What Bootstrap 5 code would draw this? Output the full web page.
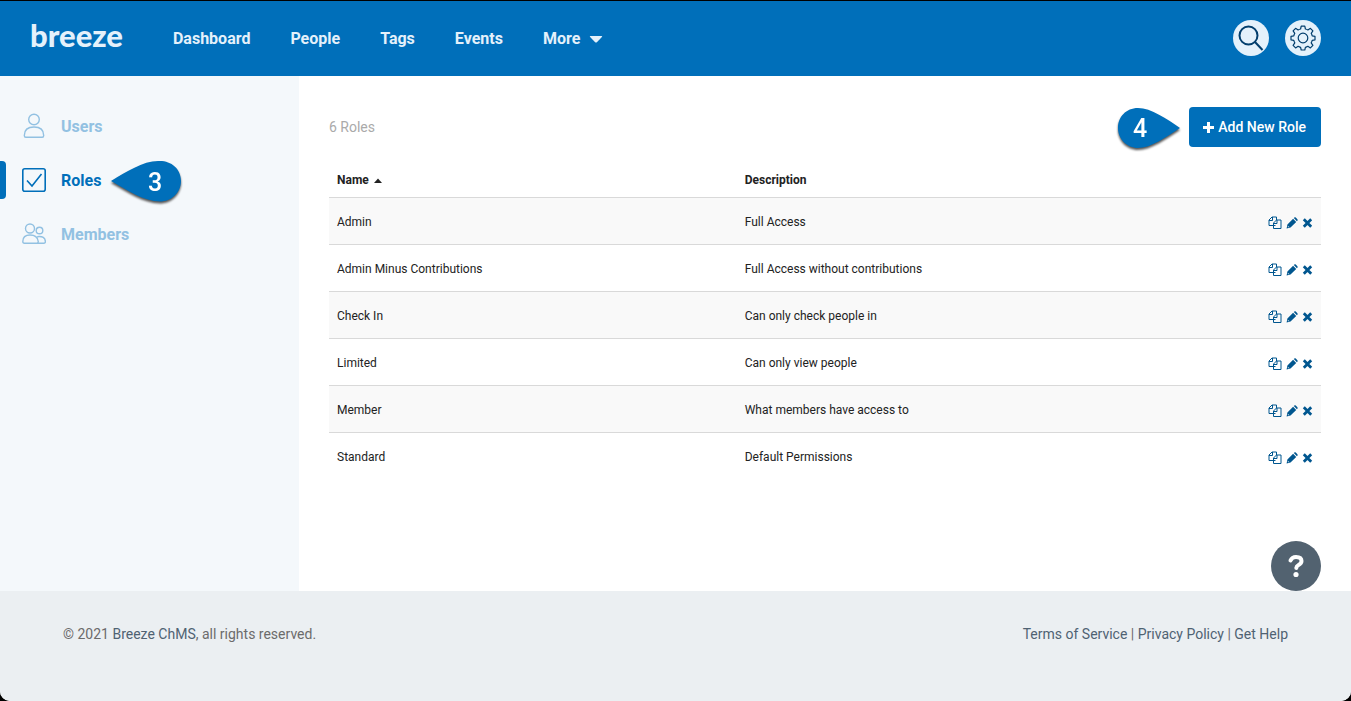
<!DOCTYPE html>
<html lang="en">
<head>
<meta charset="utf-8">
<meta name="viewport" content="width=device-width, initial-scale=1">
<title>Roles | Breeze</title>
<link href="https://cdn.jsdelivr.net/npm/bootstrap@5.3.0/dist/css/bootstrap.min.css" rel="stylesheet">
<style>
  :root { --brand: #006fba; --pale: #e4f1fb; --slate: #4f6272; }
  body { font-family: Roboto, "Liberation Sans", sans-serif; font-size: 14px; line-height: 20px; background: #000; color: #333; }
  a { text-decoration: none; }
  .frame { border-top: 1px solid #000; border-radius: 0 0 10px 10px; overflow: hidden; background: #fff; }
  .topbar { background: var(--brand); padding: 0 30px; min-height: 75px; }
  .logo { font-family: Lato, sans-serif; font-weight: 900; font-size: 31px; line-height: 40px; color: var(--pale); padding-bottom: 8px; margin-right: 50px; }
  .topbar .nav { gap: 40px; }
  .topbar .nav-link { padding: 0; font-size: 16px; font-weight: 700; line-height: 24px; color: var(--pale); }
  .round-tools { padding-bottom: 2px; }
  .round-btn { width: 36px; height: 36px; padding: 0; border: 0; border-radius: 50%; background: var(--pale); color: #023e6d; }
  .sidebar { flex: 0 0 299px; background: #f4f8fb; padding-top: 31px; gap: 16px; }
  .side-row { height: 38px; padding-left: 22px; }
  .side-row a { gap: 15px; font-size: 16px; font-weight: 700; line-height: 24px; color: #92c1e2; }
  .side-row span { padding-top: 2px; }
  .side-row.current { position: relative; }
  .side-row.current::before { content: ""; position: absolute; left: 0; top: 0; bottom: 0; width: 6px; background: var(--brand); border-radius: 0 4px 4px 0; }
  .side-row.current a { color: var(--brand); }
  .side-row .marker { margin-left: 9px; }
  .marker { filter: drop-shadow(0 2px 1px #555); }
  .marker text { font: 500 25px Roboto, sans-serif; fill: #fff; text-anchor: middle; }
  .content { padding: 30px; }
  .content-head { margin-bottom: 15px; }
  .role-count { color: #aaa; }
  .btn-add { --bs-btn-color: #fff; --bs-btn-bg: var(--brand); --bs-btn-hover-color: #fff; --bs-btn-hover-bg: #005c9b; height: 40px; padding: 0 15px 0 14px; border: 0; border-radius: 4px; font-size: 14px; font-weight: 500; line-height: 20px; }
  .roles { font-size: 12px; line-height: 18px; --bs-table-striped-bg: #f9f9f9; --bs-table-color: #222; --bs-table-striped-color: #222; }
  .roles th { padding: 8px; border-color: #d9d9d9; }
  .roles td { padding: 15px 8px 13px; border-color: #d9d9d9; }
  .roles tbody tr:last-child td { border-bottom: 0; }
  .roles .col-name { width: 41.1%; }
  .roles a { color: #00568f; }
  .actions { gap: 4px; height: 18px; padding-top: 2px; }
  .help { width: 50px; height: 50px; padding: 0; border: 0; border-radius: 50%; background: #526270; right: 30px; bottom: 0; }
  .foot { background: #ebeff2; color: #6b6b6b; padding: 33px 63px 57px; }
  .foot a { color: var(--slate); }
</style>
</head>
<body>
<svg class="d-none">
  <symbol id="copy" viewBox="0 0 14 14"><g fill="none" stroke="currentColor"><path d="M7.500 9.500h-6.500v-5.500l3-3h4.500v3M4.500 1v3.500h-3.500M5.500 12.500v-5.500l3-3h4.500v8.500zM9 4v3.500h-3.500"/></g></symbol>
  <symbol id="edit" viewBox="0 0 12 12"><path fill="currentColor" d="M.6 11.400l.8-3.900 5.700-5.700 3.100 3.100-5.700 5.700zM7.800 1.100l.5-.5q.8-.6 1.500 0l1.600 1.600q.6.800 0 1.500l-.5.500z"/><path d="M2.200 9v.9h.9" stroke="#fff" stroke-width=".6" fill="none"/></symbol>
  <symbol id="remove" viewBox="0 0 10 10"><path stroke="currentColor" stroke-width="2.800" d="M1.300 1.300l7.400 7.400M8.700 1.300l-7.400 7.400"/></symbol>
</svg>
<div class="frame d-flex flex-column min-vh-100">
  <header class="topbar d-flex align-items-center">
    <a class="logo" href="#">breeze</a>
    <nav class="nav" aria-label="Main">
      <a class="nav-link" href="#">Dashboard</a>
      <a class="nav-link" href="#">People</a>
      <a class="nav-link" href="#">Tags</a>
      <a class="nav-link" href="#">Events</a>
      <a class="nav-link d-flex align-items-center gap-2" href="#">More <svg width="16" height="8" aria-hidden="true"><path fill="currentColor" d="M2.500 1h11q1.300 0 .4 1l-5 5.200q-.9.800-1.800 0l-5-5.200q-.9-1 .4-1z"/></svg></a>
    </nav>
    <div class="round-tools d-flex gap-3 ms-auto">
      <button class="round-btn d-grid justify-content-center align-content-center" type="button" aria-label="Search"><svg width="26" height="26" fill="none" stroke="currentColor" stroke-width="2"><circle cx="10.500" cy="10.500" r="9"/><path d="M17 17l7.500 8"/></svg></button>
      <button class="round-btn d-grid justify-content-center align-content-center" type="button" aria-label="Settings"><svg width="26" height="26" viewBox="0 0 26 26" fill="none" stroke="currentColor" stroke-width="1.200" stroke-linejoin="round"><circle cx="13" cy="13" r="4.800"/><path d="M11.200 1.200h3.600l.6 2.800q1.300.3 2.500 1l2.500-1.700 2.500 2.500-1.700 2.500q.7 1.200 1 2.500l2.800.5v3.500l-2.800.6q-.3 1.300-1 2.500l1.700 2.500-2.500 2.500-2.500-1.600q-1.200.7-2.500 1l-.6 2.700h-3.600l-.6-2.700q-1.300-.3-2.500-1l-2.500 1.600-2.500-2.500 1.700-2.500q-.7-1.200-1-2.500l-2.800-.6v-3.500l2.800-.5q.3-1.300 1-2.500l-1.700-2.500 2.500-2.500 2.500 1.700q1.200-.7 2.500-1z"/></svg></button>
    </div>
  </header>

  <main class="d-flex flex-grow-1 position-relative">
    <nav class="sidebar d-flex flex-column" aria-label="Settings sections">
      <div class="side-row d-flex align-items-center">
        <a class="d-flex align-items-center" href="#"><svg width="24" height="26" fill="none" stroke="currentColor" stroke-width="1.400"><circle cx="12" cy="6.500" r="5.300"/><path d="M2.300 22.500q0-8.500 9.700-8.500t9.700 8.500q0 1.800-1.500 1.800h-16.400q-1.500 0-1.500-1.800z"/></svg><span>Users</span></a>
      </div>
      <div class="side-row current d-flex align-items-center">
        <a class="d-flex align-items-center" href="#" aria-current="page"><svg width="24" height="24" fill="none" stroke="currentColor" stroke-width="1.600"><rect x=".8" y=".8" width="22.400" height="22.400" rx="2"/><path d="M5 12.500l5 5.500 9.500-12"/></svg><span>Roles</span></a>
        <svg class="marker" width="72" height="44" aria-label="Step 3"><path fill="#006fba" d="M1 23C16 14 33 3 48 3C60 2 71 10 71 23C71 35 61 43.500 50 43.500C34 43.500 17 32 1 23z"/><text x="45" y="33">3</text></svg>
      </div>
      <div class="side-row d-flex align-items-center">
        <a class="d-flex align-items-center" href="#"><svg width="24" height="22" fill="none" stroke="currentColor" stroke-width="1.400"><circle cx="8" cy="5.500" r="4.500"/><circle cx="17.500" cy="7.500" r="3.300"/><path d="M.8 18.500q0-6.500 7.200-6.500 7.400 0 8.300 6.500 0 1.700-1.500 1.700h-12.500q-1.500 0-1.500-1.700zM15.200 13.700q8-1 8.200 5 0 1.500-1.400 1.500h-7"/></svg><span>Members</span></a>
      </div>
    </nav>

    <section class="content flex-grow-1">
      <div class="content-head d-flex align-items-center justify-content-between">
        <span class="role-count">6 Roles</span>
        <div class="d-flex align-items-center gap-2">
          <svg class="marker" width="64" height="42" aria-label="Step 4"><path fill="#006fba" d="M63 22C50 13 34 2 21 2C9 2 1 11 1 22C1 33 10 42 21 42C34 42 49 31 63 22z"/><text x="23" y="31">4</text></svg>
          <button class="btn btn-add d-flex align-items-center gap-1" type="button"><svg width="11" height="11" aria-hidden="true"><path fill="#fff" d="M4 0h3v4h4v3h-4v4h-3v-4h-4v-3h4z"/></svg>Add New Role</button>
        </div>
      </div>
      <table class="roles table table-striped mb-0">
        <thead><tr><th class="col-name" scope="col"><span class="me-1">Name</span><svg width="10" height="5" aria-hidden="true"><path fill="#222" d="M1 5l4-4.500 4 4.500z"/></svg></th><th scope="col">Description</th><th scope="col" aria-label="Actions"></th></tr></thead>
        <tbody id="roles"></tbody>
      </table>
    </section>
    <button class="help position-absolute" type="button" aria-label="Help"><svg width="18" height="24" fill="none" stroke="#fff" stroke-width="4" stroke-linecap="round"><path d="M3.500 6.500Q5 3 9 3Q14.500 3 14.500 7Q14.500 9.300 11.500 11Q9.500 12 9.300 14"/><circle cx="9" cy="20.500" r="2.600" fill="#fff" stroke="none"/></svg></button>
  </main>

  <footer class="foot d-flex justify-content-between">
    <span>© 2021 <a href="#">Breeze ChMS</a>, all rights reserved.</span>
    <span><a href="#">Terms of Service</a> | <a href="#">Privacy Policy</a> | <a href="#">Get Help</a></span>
  </footer>
</div>
<script src="https://cdn.jsdelivr.net/npm/bootstrap@5.3.0/dist/js/bootstrap.bundle.min.js"></script>
<script>
  const roles = [
    ['Admin', 'Full Access'],
    ['Admin Minus Contributions', 'Full Access without contributions'],
    ['Check In', 'Can only check people in'],
    ['Limited', 'Can only view people'],
    ['Member', 'What members have access to'],
    ['Standard', 'Default Permissions']
  ];
  const action = (label, icon, w, h) =>
    `<a class="d-flex" href="#" aria-label="${label}"><svg width="${w}" height="${h}"><use href="#${icon}"/></svg></a>`;
  document.getElementById('roles').innerHTML = roles.map(([name, text]) => `
    <tr><td>${name}</td><td>${text}</td><td><div class="actions d-flex align-items-center justify-content-end">
      ${action('Copy ' + name, 'copy', 14, 14)}${action('Edit ' + name, 'edit', 12, 12)}${action('Delete ' + name, 'remove', 11, 10)}
    </div></td></tr>`).join('');
</script>
</body>
</html>
